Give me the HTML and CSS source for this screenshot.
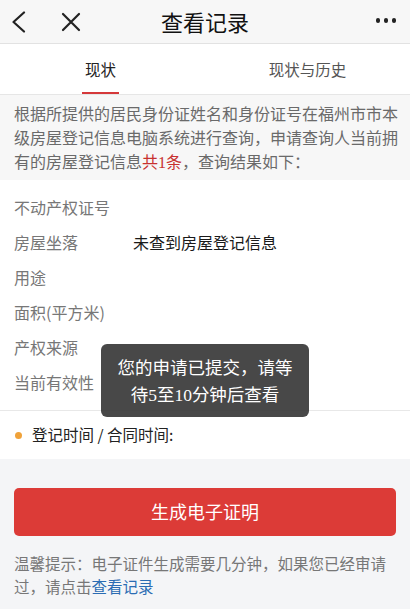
FILE: index.html
```html
<!DOCTYPE html>
<html lang="zh-CN">
<head>
<meta charset="utf-8">
<title>查看记录</title>
<link rel="stylesheet" href="styles.css">
</head>
<body>
<div class="page">
  <header class="navbar">
    <div class="nav-left">
      <svg class="icon back" width="16" height="22" viewBox="0 0 16 22"><polyline points="13,1.5 2.5,11 13,20.5" fill="none" stroke="#222" stroke-width="2.2" stroke-linecap="round" stroke-linejoin="round"/></svg>
      <svg class="icon close" width="20" height="20" viewBox="0 0 20 20"><path d="M2 2 L18 18 M18 2 L2 18" stroke="#222" stroke-width="2.2" stroke-linecap="round"/></svg>
    </div>
    <h1 class="title">查看记录</h1>
    <div class="nav-right">
      <span class="dot"></span><span class="dot"></span><span class="dot"></span>
    </div>
  </header>

  <nav class="tabs">
    <div class="tab active"><span>现状</span></div>
    <div class="tab"><span>现状与历史</span></div>
  </nav>

  <p class="intro">根据所提供的居民身份证姓名和身份证号在福州市市本级房屋登记信息电脑系统进行查询，申请查询人当前拥有的房屋登记信息<em class="hl">共<span class="num">1</span>条</em>，查询结果如下：</p>

  <section class="details">
    <div class="row"><span class="label">不动产权证号</span><span class="value"></span></div>
    <div class="row"><span class="label">房屋坐落</span><span class="value">未查到房屋登记信息</span></div>
    <div class="row"><span class="label">用途</span><span class="value"></span></div>
    <div class="row"><span class="label">面积(平方米)</span><span class="value"></span></div>
    <div class="row"><span class="label">产权来源</span><span class="value"></span></div>
    <div class="row"><span class="label">当前有效性</span><span class="value"></span></div>
  </section>

  <div class="date-row"><span class="bullet"></span><span>登记时间 / 合同时间:</span></div>

  <section class="bottom">
    <button class="btn">生成电子证明</button>
    <p class="tip">温馨提示：电子证件生成需要几分钟，如果您已经审请过，请点击<a class="link">查看记录</a></p>
  </section>

  <div class="toast">您的申请已提交，请等<br>待<span class="num">5</span>至<span class="num">10</span>分钟后查看</div>
</div>
</body>
</html>
```

FILE: styles.css
```css
* { box-sizing: border-box; margin: 0; padding: 0; }
html, body { width: 410px; height: 609px; overflow: hidden; }
body {
  font-family: "Noto Sans CJK SC", "Noto Sans", sans-serif;
  background: #f4f5f7;
  color: #222;
}
.page { position: relative; width: 410px; height: 609px; display: flex; flex-direction: column; }

.navbar {
  height: 44px;
  flex: none;
  background: #f7f7f7;
  border-bottom: 1px solid #e2e2e2;
  display: flex;
  align-items: center;
  justify-content: space-between;
  padding: 0 14px 0 11px;
  position: relative;
}
.nav-left { display: flex; align-items: center; gap: 34px; }
.title {
  position: absolute;
  left: 0; right: 0; top: 0;
  text-align: center;
  font-size: 22px;
  font-weight: 400;
  line-height: 42px;
  color: #111;
  pointer-events: none;
}
.nav-right { display: flex; gap: 3.5px; align-items: center; margin-top: -2px; }
.dot { width: 4.5px; height: 4.5px; border-radius: 50%; background: #222; display: block; }

.tabs {
  height: 51px;
  flex: none;
  background: #fff;
  border-bottom: 1px solid #e6e6e6;
  display: grid;
  grid-template-columns: 1fr 1fr;
}
.tab {
  display: flex;
  align-items: center;
  justify-content: center;
  font-size: 15.5px;
  color: #555;
}
.tab span { line-height: 50px; position: relative; }
.tab.active { color: #222; padding-right: 4px; }
.tab.active span::after {
  content: "";
  position: absolute;
  left: -3px; right: -3px;
  bottom: 0;
  height: 2px;
  background: #d5383a;
}

.intro {
  flex: none;
  height: 85px;
  background: #f7f7f7;
  padding: 6px 12px 0 14px;
  font-size: 16px;
  line-height: 24px;
  color: #6a6a6a;
}
.hl { font-style: normal; color: #c8312f; line-height: 1; }
.num { font-family: "Liberation Serif", serif; line-height: 1; }

.details {
  flex: none;
  background: #fff;
  padding: 10px 14px;
  border-bottom: 1px solid #e8e8e8;
  display: flex;
  flex-direction: column;
}
.row { height: 35px; display: flex; align-items: center; font-size: 16px; line-height: 20px; padding-bottom: 2px; }
.label { width: 119px; color: #777; flex: none; }
.value { color: #1a1a1a; }

.date-row {
  flex: none;
  background: #fff;
  height: 48px;
  display: flex;
  align-items: center;
  padding: 0 15px 2px;
  gap: 10px;
  font-size: 15.5px;
  line-height: 20px;
  color: #222;
}
.bullet { width: 7px; height: 7px; border-radius: 50%; background: #f0a23a; flex: none; margin-top: 2px; }

.bottom {
  flex: 1;
  background: #f4f5f7;
  padding: 29px 14px 0 14px;
  display: flex;
  flex-direction: column;
}
.btn {
  height: 48px;
  width: 100%;
  border: none;
  border-radius: 5px;
  background: #dc3b37;
  color: #fff;
  font-family: inherit;
  font-size: 18px;
  padding-bottom: 3px;
}
.tip {
  margin-top: 16px;
  font-size: 15.5px;
  line-height: 23px;
  color: #777;
}
.link { color: #2b6cb3; line-height: 1; }

.toast {
  position: absolute;
  left: 101px;
  top: 344px;
  width: 208px;
  height: 73px;
  background: rgba(52, 52, 52, 0.9);
  border-radius: 6px;
  color: #fff;
  font-size: 17.5px;
  line-height: 27px;
  text-align: center;
  padding-top: 9px;
}
```
